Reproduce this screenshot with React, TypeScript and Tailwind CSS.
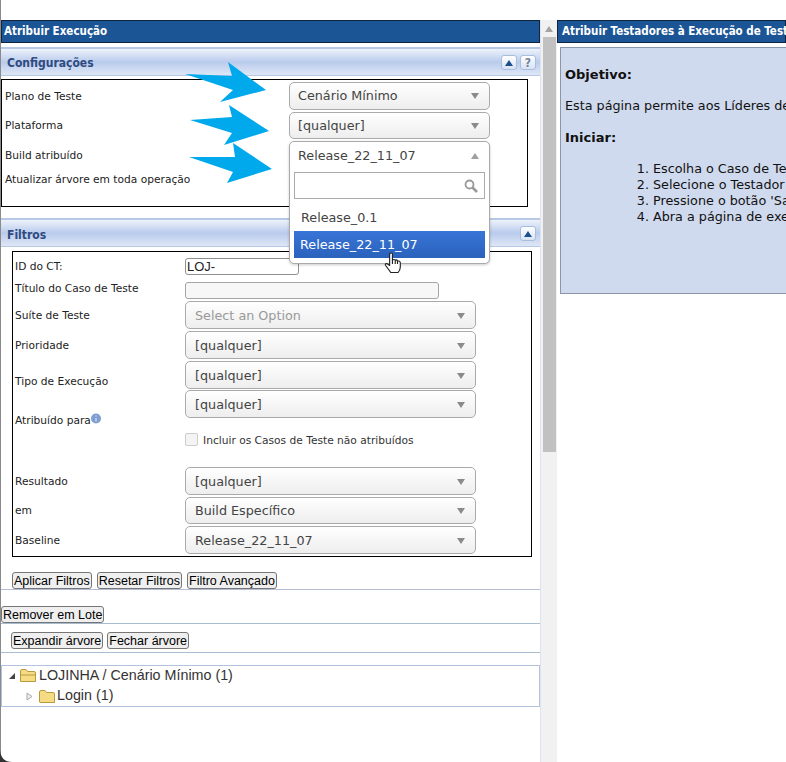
import type { ReactNode } from "react";

const ui = "font-['DejaVu_Sans',Verdana,sans-serif]";
const heading = "font-['DejaVu_Sans_Condensed','DejaVu_Sans',sans-serif]";

function Caret({ up, color = "#8a8a8a" }: { up?: boolean; color?: string }) {
  return (
    <svg width="8" height="6" viewBox="0 0 8 6" className="shrink-0">
      <path d={up ? "M4 0 L8 6 L0 6 Z" : "M0 0 L8 0 L4 6 Z"} fill={color} />
    </svg>
  );
}

function Select({ text, muted, className }: { text: string; muted?: boolean; className: string }) {
  return (
    <div
      className={`flex items-center justify-between rounded-[5px] border border-[#aaaaaa] bg-gradient-to-b from-white via-[#f6f6f6] to-[#eeeeee] pr-[10px] text-[12.75px] ${
        muted ? "text-[#999999]" : "text-[#444444]"
      } ${className}`}
    >
      <span>{text}</span>
      <Caret />
    </div>
  );
}

function HeaderButton({ children, className }: { children: ReactNode; className: string }) {
  return (
    <div className={`flex h-[15px] items-center justify-center rounded-[3px] border border-[#a9bedd] bg-gradient-to-b from-white to-[#d7e2f3] text-[12px] font-bold text-[#74849e] ${className}`}>
      {children}
    </div>
  );
}

function SectionHeader({ title, help, className, titleClass }: { title: string; help?: boolean; className: string; titleClass: string }) {
  return (
    <div
      className={`flex h-[29px] items-center justify-between border-t-2 border-b border-[#b7c8e4] bg-gradient-to-b from-[#eef3fb] via-[#b9cbec] to-[#dfe7f6] pl-[6px] pr-[4px] pt-[1px] text-[12px] font-bold text-[#2f4a80] ${heading} ${className}`}
    >
      <span className={titleClass}>{title}</span>
      <div className="flex gap-[3px]">
        <HeaderButton className="w-[16px]">
          <Caret up color="#1c4f8c" />
        </HeaderButton>
        {help && <HeaderButton className="w-[16px]">?</HeaderButton>}
      </div>
    </div>
  );
}

function FilterRow({ label, labelClass, height, children }: { label: ReactNode; labelClass: string; height: string; children?: ReactNode }) {
  return (
    <div className={`flex ${height}`}>
      <div className={`w-[171px] shrink-0 pl-[1px] text-[10.65px] leading-[16px] text-[#222222] ${labelClass}`}>{label}</div>
      <div>{children}</div>
    </div>
  );
}

function Btn({ children }: { children: ReactNode }) {
  return (
    <button className="h-[17px] rounded-[3px] border border-[#767676] bg-[#efefef] px-[1px] font-['Liberation_Sans',Arial,sans-serif] text-[12.5px] leading-[14px] text-black">
      {children}
    </button>
  );
}

function Folder({ open }: { open?: boolean }) {
  return (
    <svg width="16" height="15" viewBox="0 0 16 15" className="shrink-0">
      <path d="M0.5 13 V3 Q0.5 1.5 2 1.5 H6 L7.5 3.5 H14 Q15.5 3.5 15.5 5 V13.5 H1 Z" fill="#f5dc84" stroke="#b99a3c" />
      {open && <path d="M0.5 13.5 L0.5 7 H15.5 V13.5 Z" fill="#f6dd85" stroke="#b99a3c" />}
    </svg>
  );
}

export default function App() {
  return (
    <div className={`relative flex h-[762px] w-[786px] overflow-hidden bg-white ${ui}`}>
      {/* left window edge */}
      <div className="h-full w-[1px] shrink-0 bg-[#8a8a8a]" />

      {/* left pane */}
      <div className="w-[539px] shrink-0 pt-[20px]">
        <div className={`flex h-[23px] items-center border border-[#10243f] bg-[#1c5595] pl-[2px] text-[11.5px] font-bold text-white ${heading}`}>
          Atribuir Execução
        </div>

        <SectionHeader title="Configurações" help titleClass="mt-[1px]" className="mt-[4px]" />

        <div className="mt-[3px] mr-[12px] flex h-[128px] border border-black">
          <div className="w-[287px] shrink-0 pl-[3px] text-[10.65px] leading-[16px] text-[#222222]">
            <div className="pt-[9px]">Plano de Teste</div>
            <div className="pt-[13px]">Plataforma</div>
            <div className="pt-[14px]">Build atribuído</div>
            <div className="pt-[8px]">Atualizar árvore em toda operação</div>
          </div>
          <div className="pt-[2px]">
            <Select text="Cenário Mínimo" className="h-[28px] w-[201px] pl-[8px]" />
            <Select text="[qualquer]" className="mt-[2px] h-[27px] w-[201px] pl-[8px]" />
          </div>
        </div>

        <SectionHeader title="Filtros" titleClass="mt-[3px]" className="mt-[11px]" />

        <div className="mt-[4px] ml-[11px] mr-[8px] h-[306px] border border-black pt-[6px] pl-[1px]">
          <FilterRow height="h-[24px]" labelClass="pt-[1px]" label="ID do CT:">
            <div className="h-[17px] w-[114px] rounded-[3px] border border-[#8f8f8f] pl-[1px] font-['Liberation_Sans',Arial,sans-serif] text-[13px] leading-[16px] text-[#222222]">
              LOJ-
            </div>
          </FilterRow>
          <FilterRow height="h-[19px]" labelClass="mt-[-1px]" label="Título do Caso de Teste">
            <div className="h-[17px] w-[254px] rounded-[3px] border border-[#a5a5a5] bg-[#f7f7f7]" />
          </FilterRow>
          <FilterRow height="h-[30px]" labelClass="pt-[7px]" label="Suíte de Teste">
            <Select muted text="Select an Option" className="h-[28px] w-[291px] pl-[9px] pt-[1px]" />
          </FilterRow>
          <FilterRow height="h-[30px]" labelClass="pt-[7px]" label="Prioridade">
            <Select text="[qualquer]" className="h-[28px] w-[291px] pl-[9px] pt-[1px]" />
          </FilterRow>
          <FilterRow height="h-[29px]" labelClass="pt-[13px]" label="Tipo de Execução">
            <Select text="[qualquer]" className="h-[28px] w-[291px] pl-[9px] pt-[1px]" />
          </FilterRow>
          <FilterRow
            height="h-[77px]"
            labelClass="pt-[23px]"
            label={
              <span className="inline-flex items-start">
                Atribuído para
                <svg width="10" height="11" viewBox="0 0 10 11" className="shrink-0">
                  <circle cx="5" cy="5.5" r="5" fill="#7f9fd0" />
                  <path d="M5 2.5 V3.5 M5 5 V8.5" stroke="#e8eef8" />
                </svg>
              </span>
            }
          >
            <Select text="[qualquer]" className="h-[28px] w-[291px] pl-[9px] pt-[1px]" />
            <div className="mt-[15px] flex items-start gap-[5px] text-[10.65px] leading-[16px] text-[#333333]">
              <div className="h-[13px] w-[13px] rounded-[2px] border border-[#cccccc] bg-[#f4f4f4]" />
              <span>Incluir os Casos de Teste não atribuídos</span>
            </div>
          </FilterRow>
          <FilterRow height="h-[30px]" labelClass="pt-[7px]" label="Resultado">
            <Select text="[qualquer]" className="h-[28px] w-[291px] pl-[9px] pt-[1px]" />
          </FilterRow>
          <FilterRow height="h-[29px]" labelClass="pt-[6px]" label="em">
            <Select text="Build Específico" className="h-[27px] w-[291px] pl-[9px] pt-[1px]" />
          </FilterRow>
          <FilterRow height="h-[28px]" labelClass="pt-[7px]" label="Baseline">
            <Select text="Release_22_11_07" className="h-[28px] w-[291px] pl-[9px] pt-[1px]" />
          </FilterRow>
        </div>

        <div className="mt-[15px] flex h-[18px] gap-[5px] border-b border-[#b4bdd3] pl-[11px]">
          <Btn>Aplicar Filtros</Btn>
          <Btn>Resetar Filtros</Btn>
          <Btn>Filtro Avançado</Btn>
        </div>
        <div className="mt-[16px] flex h-[18px] border-b border-[#a9bccf]">
          <Btn>Remover em Lote</Btn>
        </div>
        <div className="mt-[8px] flex h-[21px] gap-[4px] border-b border-[#a9bccf] pl-[10px]">
          <Btn>Expandir árvore</Btn>
          <Btn>Fechar árvore</Btn>
        </div>

        <div className="mt-[12px] h-[42px] border border-[#b1c3de] font-['Liberation_Sans',Arial,sans-serif] text-[14.3px] text-[#333333]">
          <div className="flex h-[19px] items-center pl-[6px]">
            <svg width="8" height="8" viewBox="0 0 8 8" className="mr-[4px] shrink-0">
              <path d="M7 1 V7 H1 Z" fill="#444444" />
            </svg>
            <Folder open />
            <span className="ml-[3px]">LOJINHA / Cenário Mínimo (1)</span>
          </div>
          <div className="flex h-[21px] items-center pl-[24px] pt-[1px]">
            <svg width="7" height="9" viewBox="0 0 7 9" className="mr-[6px] shrink-0">
              <path d="M1 1 L6 4.5 L1 8 Z" fill="#eeeeee" stroke="#aaaaaa" />
            </svg>
            <Folder />
            <span className="ml-[2px]">Login (1)</span>
          </div>
        </div>
      </div>

      {/* scrollbar */}
      <div className="mt-[20px] flex w-[17px] shrink-0 flex-col items-center border-l border-[#dde3f0] bg-[#f1f1f1]">
        <div className="flex h-[17px] items-center">
          <Caret up color="#a3a3a3" />
        </div>
        <div className="h-[415px] w-[13px] bg-[#c1c1c1]" />
      </div>

      {/* right pane */}
      <div className="min-w-0 flex-1 pt-[20px]">
        <div className={`flex h-[23px] items-center whitespace-nowrap border border-[#10243f] bg-[#1c5595] pl-[4px] text-[11.5px] font-bold text-white ${heading}`}>
          Atribuir Testadores à Execução de Teste
        </div>
        <div className="ml-[3px] mr-[-4px] mt-[4px] h-[247px] whitespace-nowrap border border-[#8d96a8] bg-[#d0daee] pl-[4px] text-[12.75px] text-[#111111]">
          <h2 className="mt-[19px] text-[13px] font-bold leading-[16px]">Objetivo:</h2>
          <p className="mt-[16px] leading-[14px]">Esta página permite aos Líderes de</p>
          <h2 className="mt-[17px] text-[13px] font-bold leading-[16px]">Iniciar:</h2>
          <ol className="mt-[15px] list-decimal pl-[88px] leading-[16px]">
            <li>Escolha o Caso de Tes</li>
            <li>Selecione o Testador</li>
            <li>Pressione o botão 'Sa</li>
            <li>Abra a página de exe</li>
          </ol>
        </div>
      </div>

      {/* open build dropdown */}
      <div className="absolute left-[289px] top-[141px] h-[123px] w-[201px] rounded-[5px] border border-[#aaaaaa] bg-white px-[4px] shadow-[0_1px_3px_rgba(0,0,0,0.2)]">
        <div className="flex h-[28px] items-center justify-between pl-[4px] pr-[6px] text-[12.75px] text-[#444444]">
          <span>Release_22_11_07</span>
          <Caret up color="#a0a0a0" />
        </div>
        <div className="mt-[2px] flex h-[27px] items-center justify-end border border-[#aaaaaa] pr-[6px]">
          <svg width="14" height="14" viewBox="0 0 14 14" fill="none" stroke="#9a9a9a">
            <circle cx="5.5" cy="5.5" r="4" strokeWidth="1.8" />
            <path d="M8.5 8.5 L13 13" strokeWidth="2.6" />
          </svg>
        </div>
        <div className="flex h-[32px] items-center pl-[7px] pt-[5px] text-[12.75px] text-[#444444]">Release_0.1</div>
        <div className="flex h-[27px] items-center bg-gradient-to-b from-[#3875d7] to-[#2a62bc] pl-[6px] text-[12.75px] text-white">Release_22_11_07</div>
      </div>

      {/* hand cursor */}
      <svg width="18" height="22" viewBox="0 0 16 22" preserveAspectRatio="none" className="absolute left-[384px] top-[252px]">
        <path
          d="M5 1.5 Q6.5 0.5 7.5 1.5 V8 Q9 7 10 8 Q11.5 7.5 12 9 Q14 8.5 14.5 10.5 V15 Q14.5 18 12.5 20.5 H6 L1.5 13.5 Q0.5 11.5 2.5 11.5 L5 13.5 Z"
          fill="white"
          stroke="#222222"
          strokeLinejoin="round"
        />
        <path d="M7.5 8 V12 M10 8 V12 M12 9 V12" stroke="#222222" fill="none" />
      </svg>

      {/* annotation arrows */}
      <svg width="280" height="130" viewBox="180 60 280 130" className="absolute left-[180px] top-[60px]">
        <polygon points="185,74 232,76 228,62 266,90 220,102 233,90" fill="#00a8ec" />
        <polygon points="190,120 232,117 229,105 269,131 224,145 232,133" fill="#00a8ec" />
        <polygon points="189,157 235,157 233,143 272,169 227,183 233,172" fill="#00a8ec" />
      </svg>

      {/* rounded window corner */}
      <svg width="12" height="12" viewBox="0 0 12 12" className="absolute bottom-0 left-0">
        <path d="M0 0 V12 H12 Q1 12 0 0 Z" fill="#333333" />
      </svg>
    </div>
  );
}
